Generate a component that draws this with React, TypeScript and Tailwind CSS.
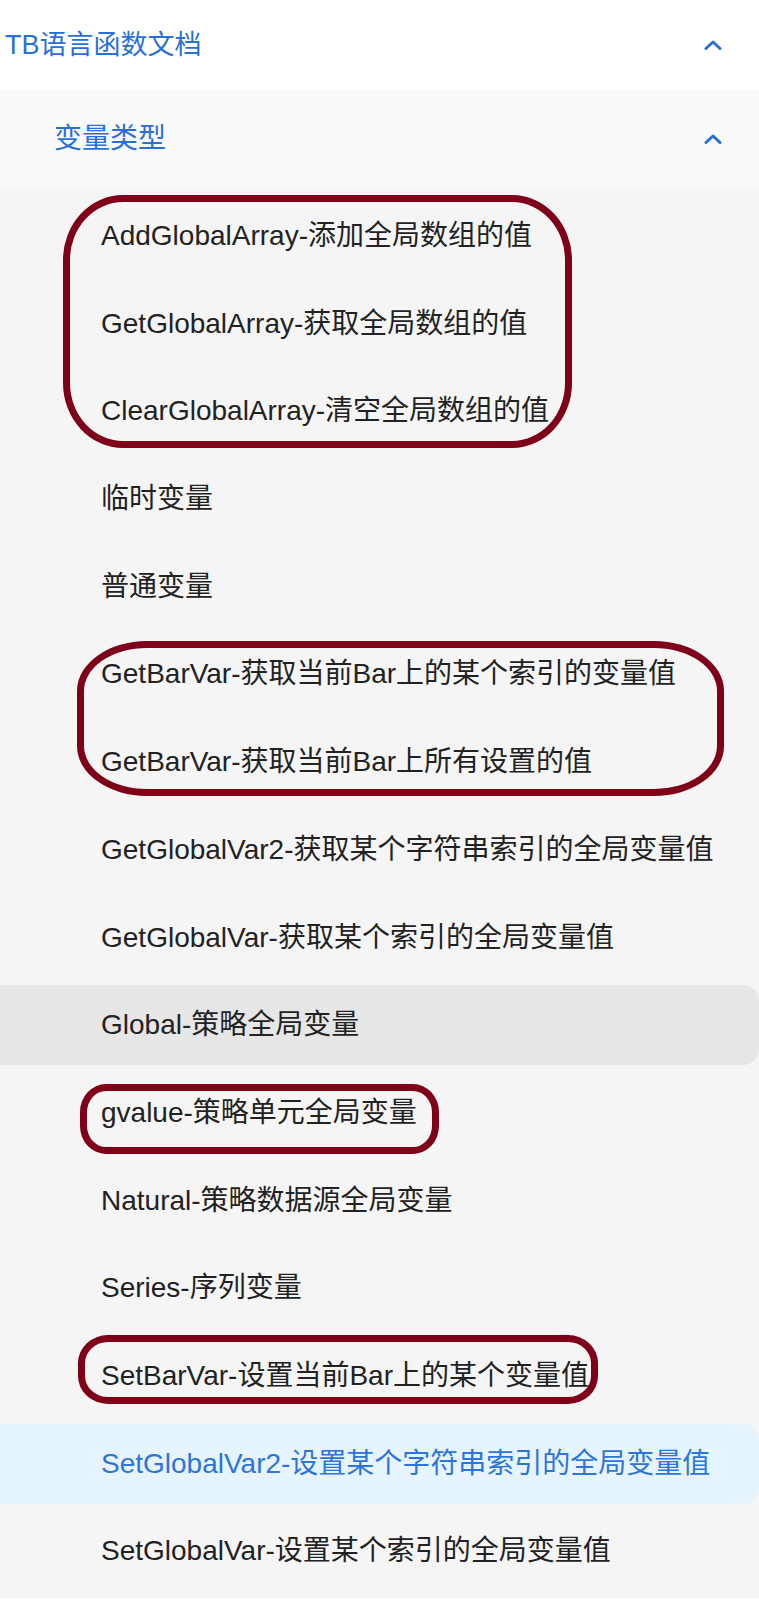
import React from "react";

const items: { label: string; state?: "hover" | "active" }[] = [
  { label: "AddGlobalArray-添加全局数组的值" },
  { label: "GetGlobalArray-获取全局数组的值" },
  { label: "ClearGlobalArray-清空全局数组的值" },
  { label: "临时变量" },
  { label: "普通变量" },
  { label: "GetBarVar-获取当前Bar上的某个索引的变量值" },
  { label: "GetBarVar-获取当前Bar上所有设置的值" },
  { label: "GetGlobalVar2-获取某个字符串索引的全局变量值" },
  { label: "GetGlobalVar-获取某个索引的全局变量值" },
  { label: "Global-策略全局变量", state: "hover" },
  { label: "gvalue-策略单元全局变量" },
  { label: "Natural-策略数据源全局变量" },
  { label: "Series-序列变量" },
  { label: "SetBarVar-设置当前Bar上的某个变量值" },
  { label: "SetGlobalVar2-设置某个字符串索引的全局变量值", state: "active" },
  { label: "SetGlobalVar-设置某个索引的全局变量值" },
];

function Chevron() {
  return (
    <svg width="18" height="10" viewBox="0 0 18 10" fill="none" className="shrink-0">
      <path d="M2 8.5 L9 2 L16 8.5" stroke="#2a6fd6" strokeWidth="3" strokeLinecap="round" strokeLinejoin="round" />
    </svg>
  );
}

export default function App() {
  return (
    <div
      className="relative w-[759px] h-[1609px] bg-white overflow-hidden"
      style={{ fontFamily: '"Liberation Sans", "Noto Sans CJK SC", sans-serif' }}
    >
      <div className="flex items-center justify-between h-[90px] pl-[5px] pr-[37px] bg-white">
        <span className="text-[27px] text-[#2a6fd6] leading-none">TB语言函数文档</span>
        <Chevron />
      </div>
      <div className="flex items-center justify-between h-[97px] pl-[54px] pr-[37px] bg-[#fafafa]">
        <span className="text-[28px] text-[#2a6fd6] leading-none">变量类型</span>
        <Chevron />
      </div>
      <div className="flex flex-col gap-[7.7px] pt-[9px] pb-[7px] bg-[#f5f5f5]">
        {items.map((it) => (
          <div
            key={it.label}
            className={
              it.state === "active"
                ? "flex items-center h-[80px] pl-[101px] rounded-r-[16px] bg-[#e6f4ff] text-[#2f74d8]"
                : it.state === "hover"
                ? "flex items-center h-[80px] pl-[101px] rounded-r-[16px] bg-[#e6e6e6] text-[#222222]"
                : "flex items-center h-[80px] pl-[101px] text-[#222222]"
            }
          >
            <span className="text-[28px] leading-none whitespace-nowrap">{it.label}</span>
          </div>
        ))}
      </div>

      <div className="absolute left-[63px] top-[195px] w-[509px] h-[253px] border-[7px] border-[#7f0019] rounded-[60px/65px]" />
      <div className="absolute left-[77px] top-[641px] w-[647px] h-[155px] border-[7px] border-[#7f0019] rounded-[70px/50px]" />
      <div className="absolute left-[80px] top-[1084px] w-[359px] h-[70px] border-[7px] border-[#7f0019] rounded-[26px/28px]" />
      <div className="absolute left-[78px] top-[1335px] w-[520px] h-[69px] border-[7px] border-[#7f0019] rounded-[30px/28px]" />
    </div>
  );
}
